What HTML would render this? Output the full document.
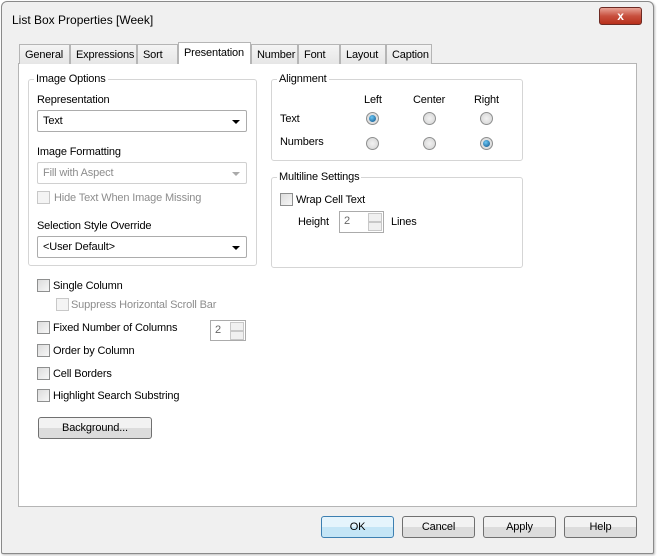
<!DOCTYPE html>
<html><head><style>
*{box-sizing:border-box;margin:0;padding:0}
body{width:657px;height:556px;background:#fff;font-family:"Liberation Sans",sans-serif;font-size:11px;letter-spacing:-0.15px;color:#000;position:relative;overflow:hidden}
.a{position:absolute}
.win{left:1px;top:1px;width:653px;height:553px;background:#f0f0f0;border:1px solid #8a8a8a;border-radius:6px 6px 2px 2px;box-shadow:1px 1px 2px #bbb}
.tab{position:absolute;top:44px;height:20px;border:1px solid #b5b5b5;border-bottom:none;background:linear-gradient(#f4f4f4,#e6e6e6);padding:4px 0 0 5px;white-space:nowrap;overflow:hidden}
.grp{position:absolute;border:1px solid #d5d5d5;border-radius:3px}
.lg{position:absolute;background:#fff;padding:0 2px;top:-7px;left:5px}
.dd{position:absolute;border:1px solid #acacac;background:#fff;height:22px;padding:4px 5px;border-radius:2px}
.dd:after{content:"";position:absolute;right:6px;top:9px;border:4px solid transparent;border-top:4px solid #000;border-bottom:none}
.dd.dis{color:#8d8d8d;border-color:#d0d0d0}
.dd.dis:after{border-top-color:#aaa}
.cb{position:absolute;width:13px;height:13px;border:1px solid #8e8f8f;background:linear-gradient(135deg,#dcdcdc,#f7f7f7)}
.cb.dis{border-color:#c8c8c8;background:#f4f4f4}
.rd{position:absolute;width:13px;height:13px;border-radius:50%;border:1px solid #8e8f8f;background:radial-gradient(#f2f2f2,#d2d2d2)}
.rd.on:after{content:"";position:absolute;left:2px;top:2px;width:7px;height:7px;border-radius:50%;background:radial-gradient(circle at 40% 35%,#6bc7f5,#0b4f86)}
.btn{position:absolute;height:22px;border:1px solid #707070;border-radius:3px;background:linear-gradient(#f2f2f2 50%,#dcdcdc 50%);text-align:center;padding-top:4px}
.sp{position:absolute;border:1px solid #ababab;background:#fff;height:22px;padding:3px 4px;color:#666}
.sp i{position:absolute;right:1px;width:14px;height:9px;border:1px solid #c8c8c8;background:#f0f0f0}
.gray{color:#8d8d8d}
</style></head><body>
<div class="a win"></div>
<div class="a" style="left:12px;top:13px;font-size:12px;letter-spacing:0">List Box Properties [Week]</div>
<div class="a" style="left:599px;top:7px;width:43px;height:18px;border:1px solid #6d2a23;border-radius:3px;background:linear-gradient(#e9a396,#c8503e 50%,#b8301c);color:#fff;text-align:center;font-weight:bold;font-size:12px;line-height:16px">x</div>
<div class="a" style="left:18px;top:63px;width:619px;height:444px;background:#fff;border:1px solid #b5b5b5"></div>
<div class="tab" style="left:19px;width:51px">General</div>
<div class="tab" style="left:70px;width:67px">Expressions</div>
<div class="tab" style="left:137px;width:41px">Sort</div>
<div class="tab" style="left:178px;top:42px;height:22px;width:73px;background:#fff;padding-top:4px">Presentation</div>
<div class="tab" style="left:251px;width:47px">Number</div>
<div class="tab" style="left:298px;width:42px">Font</div>
<div class="tab" style="left:340px;width:46px">Layout</div>
<div class="tab" style="left:386px;width:46px">Caption</div>

<div class="grp" style="left:28px;top:79px;width:229px;height:187px"><span class="lg">Image Options</span></div>
<div class="a" style="left:37px;top:94px">Representation</div>
<div class="dd" style="left:37px;top:110px;width:210px">Text</div>
<div class="a" style="left:37px;top:146px">Image Formatting</div>
<div class="dd dis" style="left:37px;top:162px;width:210px">Fill with Aspect</div>
<div class="cb dis" style="left:37px;top:191px"></div>
<div class="a gray" style="left:54px;top:192px">Hide Text When Image Missing</div>
<div class="a" style="left:37px;top:220px">Selection Style Override</div>
<div class="dd" style="left:37px;top:236px;width:210px">&lt;User Default&gt;</div>

<div class="grp" style="left:271px;top:79px;width:252px;height:82px"><span class="lg">Alignment</span></div>
<div class="a" style="left:364px;top:94px">Left</div>
<div class="a" style="left:413px;top:94px">Center</div>
<div class="a" style="left:474px;top:94px">Right</div>
<div class="a" style="left:280px;top:113px">Text</div>
<div class="a" style="left:280px;top:136px">Numbers</div>
<div class="rd on" style="left:366px;top:112px"></div>
<div class="rd" style="left:423px;top:112px"></div>
<div class="rd" style="left:480px;top:112px"></div>
<div class="rd" style="left:366px;top:137px"></div>
<div class="rd" style="left:423px;top:137px"></div>
<div class="rd on" style="left:480px;top:137px"></div>

<div class="grp" style="left:271px;top:177px;width:252px;height:91px"><span class="lg">Multiline Settings</span></div>
<div class="cb" style="left:280px;top:193px"></div>
<div class="a" style="left:296px;top:194px">Wrap Cell Text</div>
<div class="a" style="left:298px;top:216px">Height</div>
<div class="sp" style="left:339px;top:211px;width:45px">2<i style="top:1px"></i><i style="top:10px"></i></div>
<div class="a" style="left:391px;top:216px">Lines</div>

<div class="cb" style="left:37px;top:279px"></div><div class="a" style="left:53px;top:280px">Single Column</div>
<div class="cb dis" style="left:56px;top:298px"></div><div class="a gray" style="left:71px;top:299px">Suppress Horizontal Scroll Bar</div>
<div class="cb" style="left:37px;top:321px"></div><div class="a" style="left:53px;top:322px">Fixed Number of Columns</div>
<div class="sp" style="left:210px;top:320px;width:36px;height:21px">2<i style="top:1px"></i><i style="top:10px"></i></div>
<div class="cb" style="left:37px;top:344px"></div><div class="a" style="left:53px;top:345px">Order by Column</div>
<div class="cb" style="left:37px;top:367px"></div><div class="a" style="left:53px;top:368px">Cell Borders</div>
<div class="cb" style="left:37px;top:389px"></div><div class="a" style="left:53px;top:390px">Highlight Search Substring</div>
<div class="btn" style="left:38px;top:417px;width:114px">Background...</div>

<div class="btn" style="left:321px;top:516px;width:73px;border-color:#3c7fb1;background:linear-gradient(#e5f4fc 50%,#c4e5f6 50%)">OK</div>
<div class="btn" style="left:402px;top:516px;width:73px">Cancel</div>
<div class="btn" style="left:483px;top:516px;width:73px">Apply</div>
<div class="btn" style="left:564px;top:516px;width:73px">Help</div>
</body></html>
